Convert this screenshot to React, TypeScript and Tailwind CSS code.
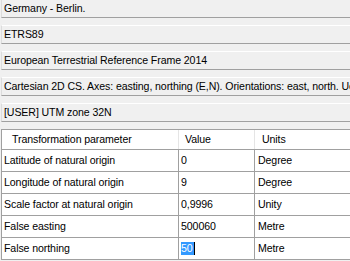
import React from "react";

const boxes = [
  "Germany - Berlin.",
  "ETRS89",
  "European Terrestrial Reference Frame 2014",
  "Cartesian 2D CS. Axes: easting, northing (E,N). Orientations: east, north. UoM: m.",
  "[USER] UTM zone 32N",
];

const rows: [string, string, string][] = [
  ["Latitude of natural origin", "0", "Degree"],
  ["Longitude of natural origin", "9", "Degree"],
  ["Scale factor at natural origin", "0,9996", "Unity"],
  ["False easting", "500060", "Metre"],
  ["False northing", "50", "Metre"],
];

export default function App() {
  return (
    <div
      className="w-[350px] h-[261px] overflow-hidden bg-[#f0f0f0] text-black text-[10.6px] leading-[13px] tracking-[-0.1px]"
      style={{ fontFamily: '"Liberation Sans", Arial, sans-serif' }}
    >
      <div className="flex flex-col gap-[7px] mt-[-1px] pl-[1px]">
        {boxes.map((t, i) => (
          <div
            key={i}
            className="w-[360px] h-[19px] border-t border-t-white border-l border-l-[#dcdcdc] border-b border-b-[#a0a0a0] bg-[#f0f0f0] pl-[2px] flex items-center whitespace-nowrap overflow-hidden"
          >
            {t}
          </div>
        ))}
      </div>
      <div className="mt-[7px] ml-[1px] w-[370px] border border-[#a0a0a0] bg-white">
        <div className="flex h-[20px] border-b border-b-[#a0a0a0] items-center">
          <div className="w-[177px] h-full border-r border-r-[#e5e5e5] pl-[10px] flex items-center">
            Transformation parameter
          </div>
          <div className="w-[76px] h-full border-r border-r-[#e5e5e5] pl-[6px] flex items-center">
            Value
          </div>
          <div className="flex-1 h-full pl-[7px] flex items-center">Units</div>
        </div>
        {rows.map((r, i) => (
          <div
            key={i}
            className={`flex ${i < rows.length - 1 ? "h-[22px] border-b border-b-[#a0a0a0]" : "h-[21px]"}`}
          >
            <div className="w-[177px] h-full border-r border-r-[#a0a0a0] pl-[2px] flex items-center whitespace-nowrap">
              {r[0]}
            </div>
            <div className="w-[76px] h-full border-r border-r-[#a0a0a0] pl-[2px] flex items-center">
              {i === rows.length - 1 ? (
                <span className="flex items-center">
                  <span className="bg-[#3399ff] text-white pr-[1px]">{r[1]}</span>
                  <span className="w-[1px] h-[13px] bg-black" />
                </span>
              ) : (
                r[1]
              )}
            </div>
            <div className="flex-1 h-full pl-[3px] flex items-center">{r[2]}</div>
          </div>
        ))}
      </div>
    </div>
  );
}
